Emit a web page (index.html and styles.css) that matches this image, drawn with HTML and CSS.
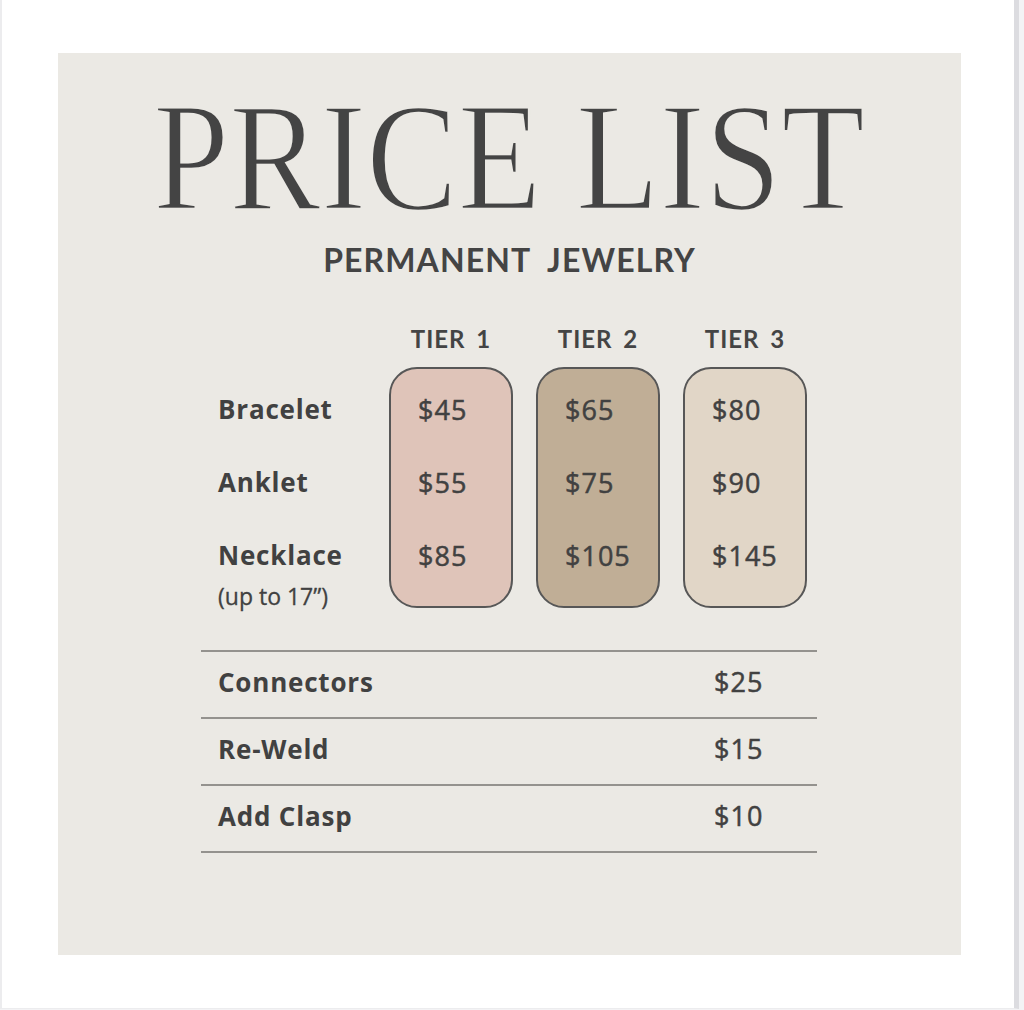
FILE: index.html
```html
<!DOCTYPE html>
<html lang="en">
<head>
<meta charset="utf-8">
<title>Price List</title>
<link rel="stylesheet" href="styles.css">
</head>
<body>
<div class="frame">
  <main class="panel">
    <h1 class="title"><span class="title-text">PRICE LIST</span></h1>
    <p class="subtitle">PERMANENT&nbsp;&nbsp;JEWELRY</p>

    <section class="tiers">
      <div class="tier-head"></div>
      <div class="tier-head">TIER&nbsp;1</div>
      <div class="tier-head">TIER&nbsp;2</div>
      <div class="tier-head">TIER&nbsp;3</div>

      <div class="labels">
        <div class="label">Bracelet</div>
        <div class="label">Anklet</div>
        <div class="label label-last">Necklace</div>
        <div class="note">(up to 17”)</div>
      </div>
      <div class="card card-1">
        <div class="price">$45</div>
        <div class="price">$55</div>
        <div class="price">$85</div>
      </div>
      <div class="card card-2">
        <div class="price">$65</div>
        <div class="price">$75</div>
        <div class="price">$105</div>
      </div>
      <div class="card card-3">
        <div class="price">$80</div>
        <div class="price">$90</div>
        <div class="price">$145</div>
      </div>
    </section>

    <section class="extras">
      <div class="extra-row"><span class="extra-name">Connectors</span><span class="extra-price">$25</span></div>
      <div class="extra-row"><span class="extra-name">Re-Weld</span><span class="extra-price">$15</span></div>
      <div class="extra-row extra-row-last"><span class="extra-name">Add Clasp</span><span class="extra-price">$10</span></div>
    </section>
  </main>
</div>
</body>
</html>
```

FILE: styles.css
```css
html, body {
  margin: 0;
  padding: 0;
}

body {
  background: #f3f3f5;
  width: 1024px;
  height: 1010px;
  overflow: hidden;
}

.frame {
  box-sizing: border-box;
  width: 1019px;
  height: 1009px;
  background: #ffffff;
  border-left: 2px solid #ececee;
  border-right: 5px solid #dcdce0;
  border-bottom: 1px solid #ececee;
  padding-top: 53px;
  padding-left: 56px;
}

.panel {
  box-sizing: border-box;
  width: 903px;
  height: 902px;
  background: #ebe9e4;
  padding-top: 27px;
  color: #414141;
  font-family: "Open Sans", Lato, "Liberation Sans", sans-serif;
}

.title {
  margin: 0;
  height: 154px;
  font-family: "Liberation Serif", serif;
  font-weight: normal;
  font-size: 154px;
  line-height: 154px;
  color: #444444;
  text-align: center;
  white-space: nowrap;
}

.title-text {
  display: inline-block;
  transform: scaleX(0.89);
  transform-origin: center;
  -webkit-text-stroke: 2.5px #ebe9e4;
  paint-order: fill stroke;
}

.subtitle {
  margin: 6px 0 0;
  font-family: Lato, "Open Sans", sans-serif;
  font-size: 32px;
  line-height: 40px;
  font-weight: bold;
  letter-spacing: 1.1px;
  text-align: center;
  color: #444444;
}

.tiers {
  margin: 44px 0 0 160px;
  display: grid;
  grid-template-columns: 148px repeat(3, 124px);
  column-gap: 23px;
  row-gap: 13px;
}

.tier-head {
  font-family: Lato, "Open Sans", sans-serif;
  font-size: 24px;
  line-height: 30px;
  font-weight: bold;
  text-align: center;
  letter-spacing: 1px;
  word-spacing: 4px;
  color: #444444;
}

.labels {
  padding-top: 27px;
}

.label {
  font-size: 26px;
  line-height: 30px;
  font-weight: 700;
  letter-spacing: 0.8px;
  margin-bottom: 43px;
}

.label-last {
  margin-bottom: 0;
}

.note {
  margin-top: 13px;
  font-size: 23px;
  line-height: 26px;
  -webkit-text-stroke: 0.3px #414141;
}

.card {
  box-sizing: border-box;
  height: 241px;
  border: 2px solid #575757;
  border-radius: 28px;
  padding: 4px 0 0 27px;
}

.card-1 { background: #dfc4b9; }
.card-2 { background: #c0ae96; }
.card-3 { background: #e1d6c7; }

.price {
  font-size: 27px;
  line-height: 73px;
  letter-spacing: 1px;
  -webkit-text-stroke: 0.5px #414141;
}

.extras {
  margin: 41px 0 0 143px;
  width: 616px;
}

.extra-row {
  display: grid;
  grid-template-columns: 496px 1fr;
  padding: 0 0 5px 17px;
  border-top: 2px solid #94928e;
  font-size: 26px;
  line-height: 60px;
}

.extra-row-last {
  border-bottom: 2px solid #94928e;
}

.extra-name {
  font-weight: 700;
  letter-spacing: 0.8px;
}

.extra-price {
  font-size: 27px;
  letter-spacing: 1px;
  -webkit-text-stroke: 0.5px #414141;
}
```
